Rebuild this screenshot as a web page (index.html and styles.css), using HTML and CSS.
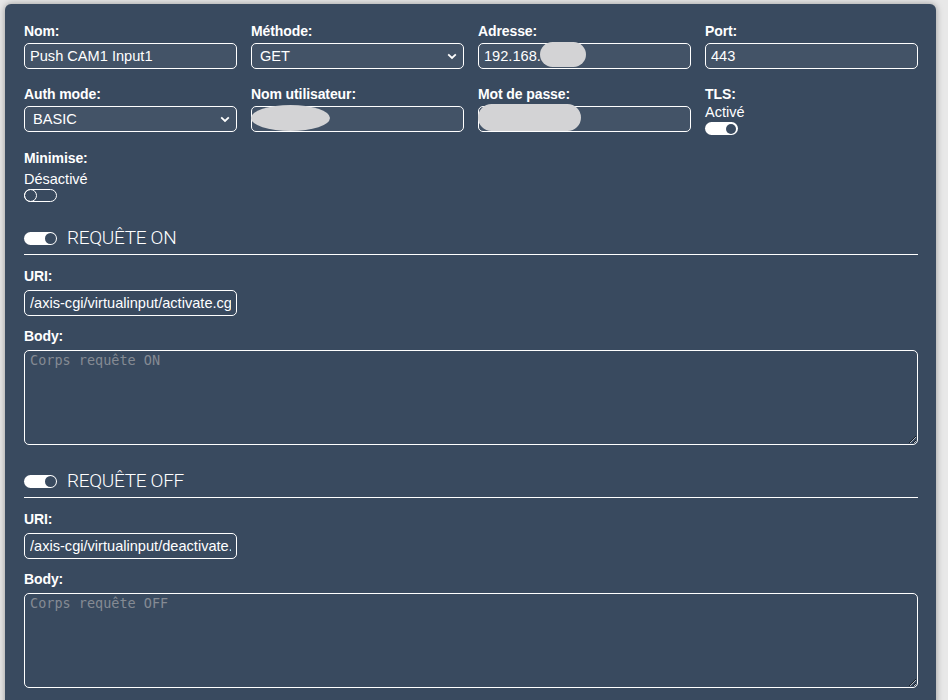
FILE: index.html
```html
<!DOCTYPE html>
<html lang="fr">
<head>
<meta charset="utf-8">
<title>Push CAM1 Input1</title>
<link rel="stylesheet" href="styles.css">
</head>
<body>
<div class="card">
  <div class="grid">
    <div class="field">
      <label class="lbl">Nom:</label>
      <div class="box"><input class="inp" value="Push CAM1 Input1"></div>
    </div>
    <div class="field">
      <label class="lbl">Méthode:</label>
      <div class="box"><select class="inp sel"><option>GET</option></select><svg class="chev" width="10" height="7" viewBox="0 0 10 7"><path d="M1.2 1.4 L5 5 L8.8 1.4" fill="none" stroke="#fff" stroke-width="1.8"/></svg></div>
    </div>
    <div class="field">
      <label class="lbl">Adresse:</label>
      <div class="box"><input class="inp" value="192.168."><span class="blob blob-addr"></span></div>
    </div>
    <div class="field">
      <label class="lbl">Port:</label>
      <div class="box"><input class="inp" value="443"></div>
    </div>
    <div class="field">
      <label class="lbl">Auth mode:</label>
      <div class="box"><select class="inp sel"><option>BASIC</option></select><svg class="chev" width="10" height="7" viewBox="0 0 10 7"><path d="M1.2 1.4 L5 5 L8.8 1.4" fill="none" stroke="#fff" stroke-width="1.8"/></svg></div>
    </div>
    <div class="field">
      <label class="lbl">Nom utilisateur:</label>
      <div class="box"><input class="inp" value=""><span class="blob blob-user"></span></div>
    </div>
    <div class="field">
      <label class="lbl">Mot de passe:</label>
      <div class="box"><input class="inp" type="password" value=""><span class="blob blob-pass"></span></div>
    </div>
    <div class="field">
      <label class="lbl">TLS:</label>
      <div class="state">Activé</div>
      <span class="tog on"></span>
    </div>
  </div>

  <div class="field mini">
    <label class="lbl">Minimise:</label>
    <div class="state">Désactivé</div>
    <span class="tog off"></span>
  </div>

  <section class="req">
    <div class="req-head"><span class="tog on big"></span><span class="req-title">REQUÊTE ON</span></div>
    <label class="lbl">URI:</label>
    <div class="uri"><input class="inp dark" value="/axis-cgi/virtualinput/activate.cgi?schemaversion=1&amp;port=1"></div>
    <label class="lbl">Body:</label>
    <textarea class="ta" placeholder="Corps requête ON"></textarea>
  </section>

  <section class="req">
    <div class="req-head"><span class="tog on big"></span><span class="req-title">REQUÊTE OFF</span></div>
    <label class="lbl">URI:</label>
    <div class="uri"><input class="inp dark" value="/axis-cgi/virtualinput/deactivate.cgi?schemaversion=1&amp;port=1"></div>
    <label class="lbl">Body:</label>
    <textarea class="ta" placeholder="Corps requête OFF"></textarea>
  </section>
</div>
</body>
</html>
```
FILE: styles.css
```css
html, body {
  margin: 0;
  background: #e8e8e8;
  font-family: "Liberation Sans", Arial, sans-serif;
  color: #fff;
  overflow: hidden;
}

.card {
  margin: 4px 12px 0 5px;
  background: #394a5f;
  border-radius: 6px;
  box-shadow: 0 0 7px rgba(0, 0, 0, 0.35);
  padding: 19px 18px 40px 19px;
}

.grid {
  display: grid;
  grid-template-columns: repeat(4, 1fr);
  column-gap: 14px;
  row-gap: 17px;
}

.field {
  display: flex;
  flex-direction: column;
  align-items: flex-start;
}

.lbl {
  display: block;
  font-weight: bold;
  font-size: 14px;
  line-height: 17px;
  margin-bottom: 3px;
  letter-spacing: -0.1px;
}

.box {
  position: relative;
  width: 100%;
}

.inp {
  display: block;
  box-sizing: border-box;
  width: 100%;
  height: 26px;
  margin: 0;
  border: 1px solid #fff;
  border-radius: 5px;
  background: #435367;
  color: #fff;
  font-family: "Liberation Sans", Arial, sans-serif;
  font-size: 14.6px;
  padding: 0 5px;
  outline: none;
}

.inp.dark {
  background: #394a5f;
}

.sel {
  appearance: none;
  -webkit-appearance: none;
  padding-left: 8px;
}

.chev {
  position: absolute;
  right: 7px;
  top: 10px;
  pointer-events: none;
}

.blob {
  position: absolute;
  background: #d3d3d5;
  border-radius: 999px;
  filter: blur(0.6px);
}

.blob-addr {
  left: 62px;
  top: -1px;
  width: 46px;
  height: 25px;
}

.blob-user {
  left: 0;
  top: -1px;
  width: 79px;
  height: 26px;
  border-radius: 50% / 50%;
}

.blob-pass {
  left: 0;
  top: -2px;
  width: 103px;
  height: 27px;
}

.state {
  font-size: 14.5px;
  line-height: 17px;
  margin-top: -2px;
}

.tog {
  position: relative;
  display: block;
  box-sizing: border-box;
  width: 33px;
  height: 13px;
  border-radius: 7px;
  margin-top: 1px;
}

.tog.on {
  background: #fff;
}

.tog.on::after {
  content: "";
  position: absolute;
  right: 2px;
  top: 1.5px;
  width: 10px;
  height: 10px;
  border-radius: 50%;
  background: #394a5f;
}

.tog.off {
  border: 1px solid #fff;
}

.tog.off::after {
  content: "";
  position: absolute;
  left: -1px;
  top: -1px;
  width: 13px;
  height: 13px;
  box-sizing: border-box;
  border: 1px solid #fff;
  border-radius: 50%;
}

.mini {
  margin-top: 15px;
}

.mini .state {
  margin-top: 1px;
}

.req {
  margin-top: 25px;
}

.req-head {
  display: flex;
  align-items: center;
  gap: 10px;
  padding-bottom: 5px;
  border-bottom: 1px solid #fff;
  margin-bottom: 13px;
}

.req-head .tog {
  margin-top: 0;
}

.tog.big::after {
  width: 11px;
  height: 11px;
  top: 1px;
  right: 1px;
}

.req-title {
  font-family: Roboto, "Liberation Sans", sans-serif;
  font-weight: 300;
  font-size: 19px;
  line-height: 22px;
  letter-spacing: -0.3px;
}

.req .lbl {
  margin-bottom: 5px;
}

.uri {
  width: 213px;
  margin-bottom: 12px;
}

.ta {
  display: block;
  box-sizing: border-box;
  width: 100%;
  height: 95px;
  margin: 0;
  border: 1px solid #fff;
  border-radius: 5px;
  background: #394a5f;
  color: #fff;
  font-family: "DejaVu Sans Mono", monospace;
  font-size: 13.5px;
  padding: 1px 5px;
  resize: both;
  outline: none;
}

.ta::placeholder {
  color: #858b94;
}
```
